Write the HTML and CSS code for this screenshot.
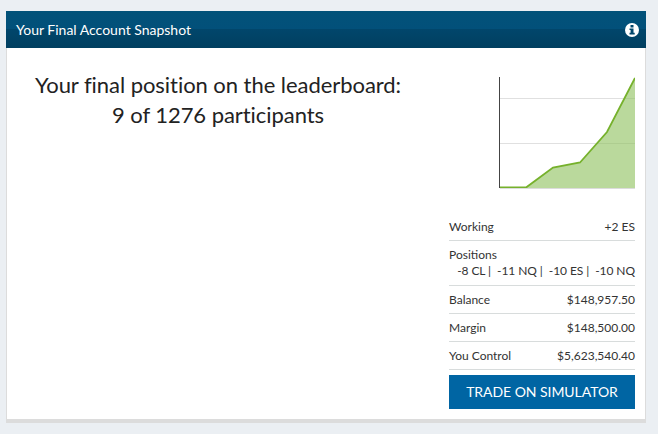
FILE: index.html
```html
<!DOCTYPE html>
<html lang="en">
<head>
<meta charset="utf-8">
<title>Your Final Account Snapshot</title>
<link rel="stylesheet" href="styles.css">
</head>
<body>
<section class="card">
  <header class="card-head">
    <h1 class="card-title">Your Final Account Snapshot</h1>
    <svg class="info" width="14" height="14" viewBox="0 0 14 14" aria-hidden="true">
      <circle cx="7" cy="7" r="7" fill="#fff"/>
      <rect x="5.500" y="2" width="3" height="2.500" fill="#01466b"/>
      <path d="M4.500 5.400h4v4.400h1.200v1.700H4.500V9.800h1.100V7.100H4.500z" fill="#01466b"/>
    </svg>
  </header>
  <div class="card-body">
    <div class="headline">
      <p class="headline-text">Your final position on the leaderboard:<br>9 of 1276 participants</p>
    </div>
    <aside class="side">
      <svg class="chart" width="136" height="112" viewBox="0 0 136 112" aria-hidden="true">
        <line x1="1" y1="21.500" x2="136" y2="21.500" stroke="#e0e0e0"/>
        <line x1="1" y1="66.500" x2="136" y2="66.500" stroke="#e0e0e0"/>
        <path d="M1 111 H27 L54 90.500 L81 85.500 L108 55 L136 1 V111Z" fill="#8cbf5a" fill-opacity=".6"/>
        <path d="M1 110.500 H27 L54 90.500 L81 85.500 L108 55 L136 1" fill="none" stroke="#76b12c" stroke-width="1.800"/>
        <line x1="0.500" y1="0" x2="0.500" y2="111" stroke="#444"/>
        <line x1="1" y1="111.500" x2="136" y2="111.500" stroke="#dcdcdc"/>
      </svg>
      <dl class="stats">
        <div class="stat"><dt>Working</dt><dd>+2 ES</dd></div>
        <div class="stat stat-stack"><dt>Positions</dt><dd>-8 CL |&nbsp; -11 NQ |&nbsp; -10 ES |&nbsp; -10 NQ</dd></div>
        <div class="stat"><dt>Balance</dt><dd>$148,957.50</dd></div>
        <div class="stat"><dt>Margin</dt><dd>$148,500.00</dd></div>
        <div class="stat"><dt>You Control</dt><dd>$5,623,540.40</dd></div>
      </dl>
      <a class="trade" href="#">TRADE ON SIMULATOR</a>
    </aside>
  </div>
</section>
</body>
</html>
```
FILE: styles.css
```css
html, body {
  margin: 0;
  padding: 0;
  height: 100%;
}
body {
  background: #ebeff3;
  font-family: Lato, "Open Sans", sans-serif;
  color: #333;
  padding: 11px 12px 11px 6px;
  box-sizing: border-box;
}
.card {
  background: #fff;
  height: 412px;
  box-sizing: border-box;
  border-left: 1px solid #dcdcdc;
  border-right: 1px solid #dcdcdc;
  border-bottom: 4px solid #dcdcdc;
  display: flex;
  flex-direction: column;
}
.card-head {
  height: 37px;
  margin: 0 -1px;
  flex: none;
  background: linear-gradient(to bottom, #025279 0, #02507a 50%, #01466b 50%, #013f60 100%);
  display: flex;
  align-items: center;
  justify-content: space-between;
  padding: 0 7px 0 10px;
}
.card-title {
  margin: 0;
  font-size: 14px;
  font-weight: 400;
  color: #fff;
}
.info { display: block; }
.card-body {
  flex: 1;
  display: flex;
  padding: 0 10px 0 0;
}
.headline {
  flex: 1;
  padding-top: 22px;
}
.headline-text {
  margin: 0;
  padding-right: 20px;
  text-align: center;
  font-size: 22px;
  letter-spacing: -0.05px;
  line-height: 30px;
  color: #222;
}
.side {
  width: 186px;
  display: flex;
  flex-direction: column;
  padding-top: 29px;
}
.chart {
  display: block;
  align-self: flex-end;
  margin-bottom: 24px;
}
.stats { margin: 0; }
.stat {
  display: flex;
  justify-content: space-between;
  align-items: center;
  height: 28px;
  box-sizing: border-box;
  border-bottom: 1px solid #d8dcdc;
  font-size: 12px;
}
.stat-stack {
  display: block;
  height: 45px;
  padding-top: 6px;
  line-height: 16px;
}
.stat-stack dd { letter-spacing: -0.07px; }
.stat dt { color: #333; }
.stat dd { margin: 0; color: #333; text-align: right; }
.trade {
  display: block;
  margin-top: 5px;
  height: 34px;
  line-height: 34px;
  background: #0065a3;
  color: #fff;
  text-align: center;
  text-decoration: none;
  font-size: 14px;
  letter-spacing: -0.05px;
}
```
